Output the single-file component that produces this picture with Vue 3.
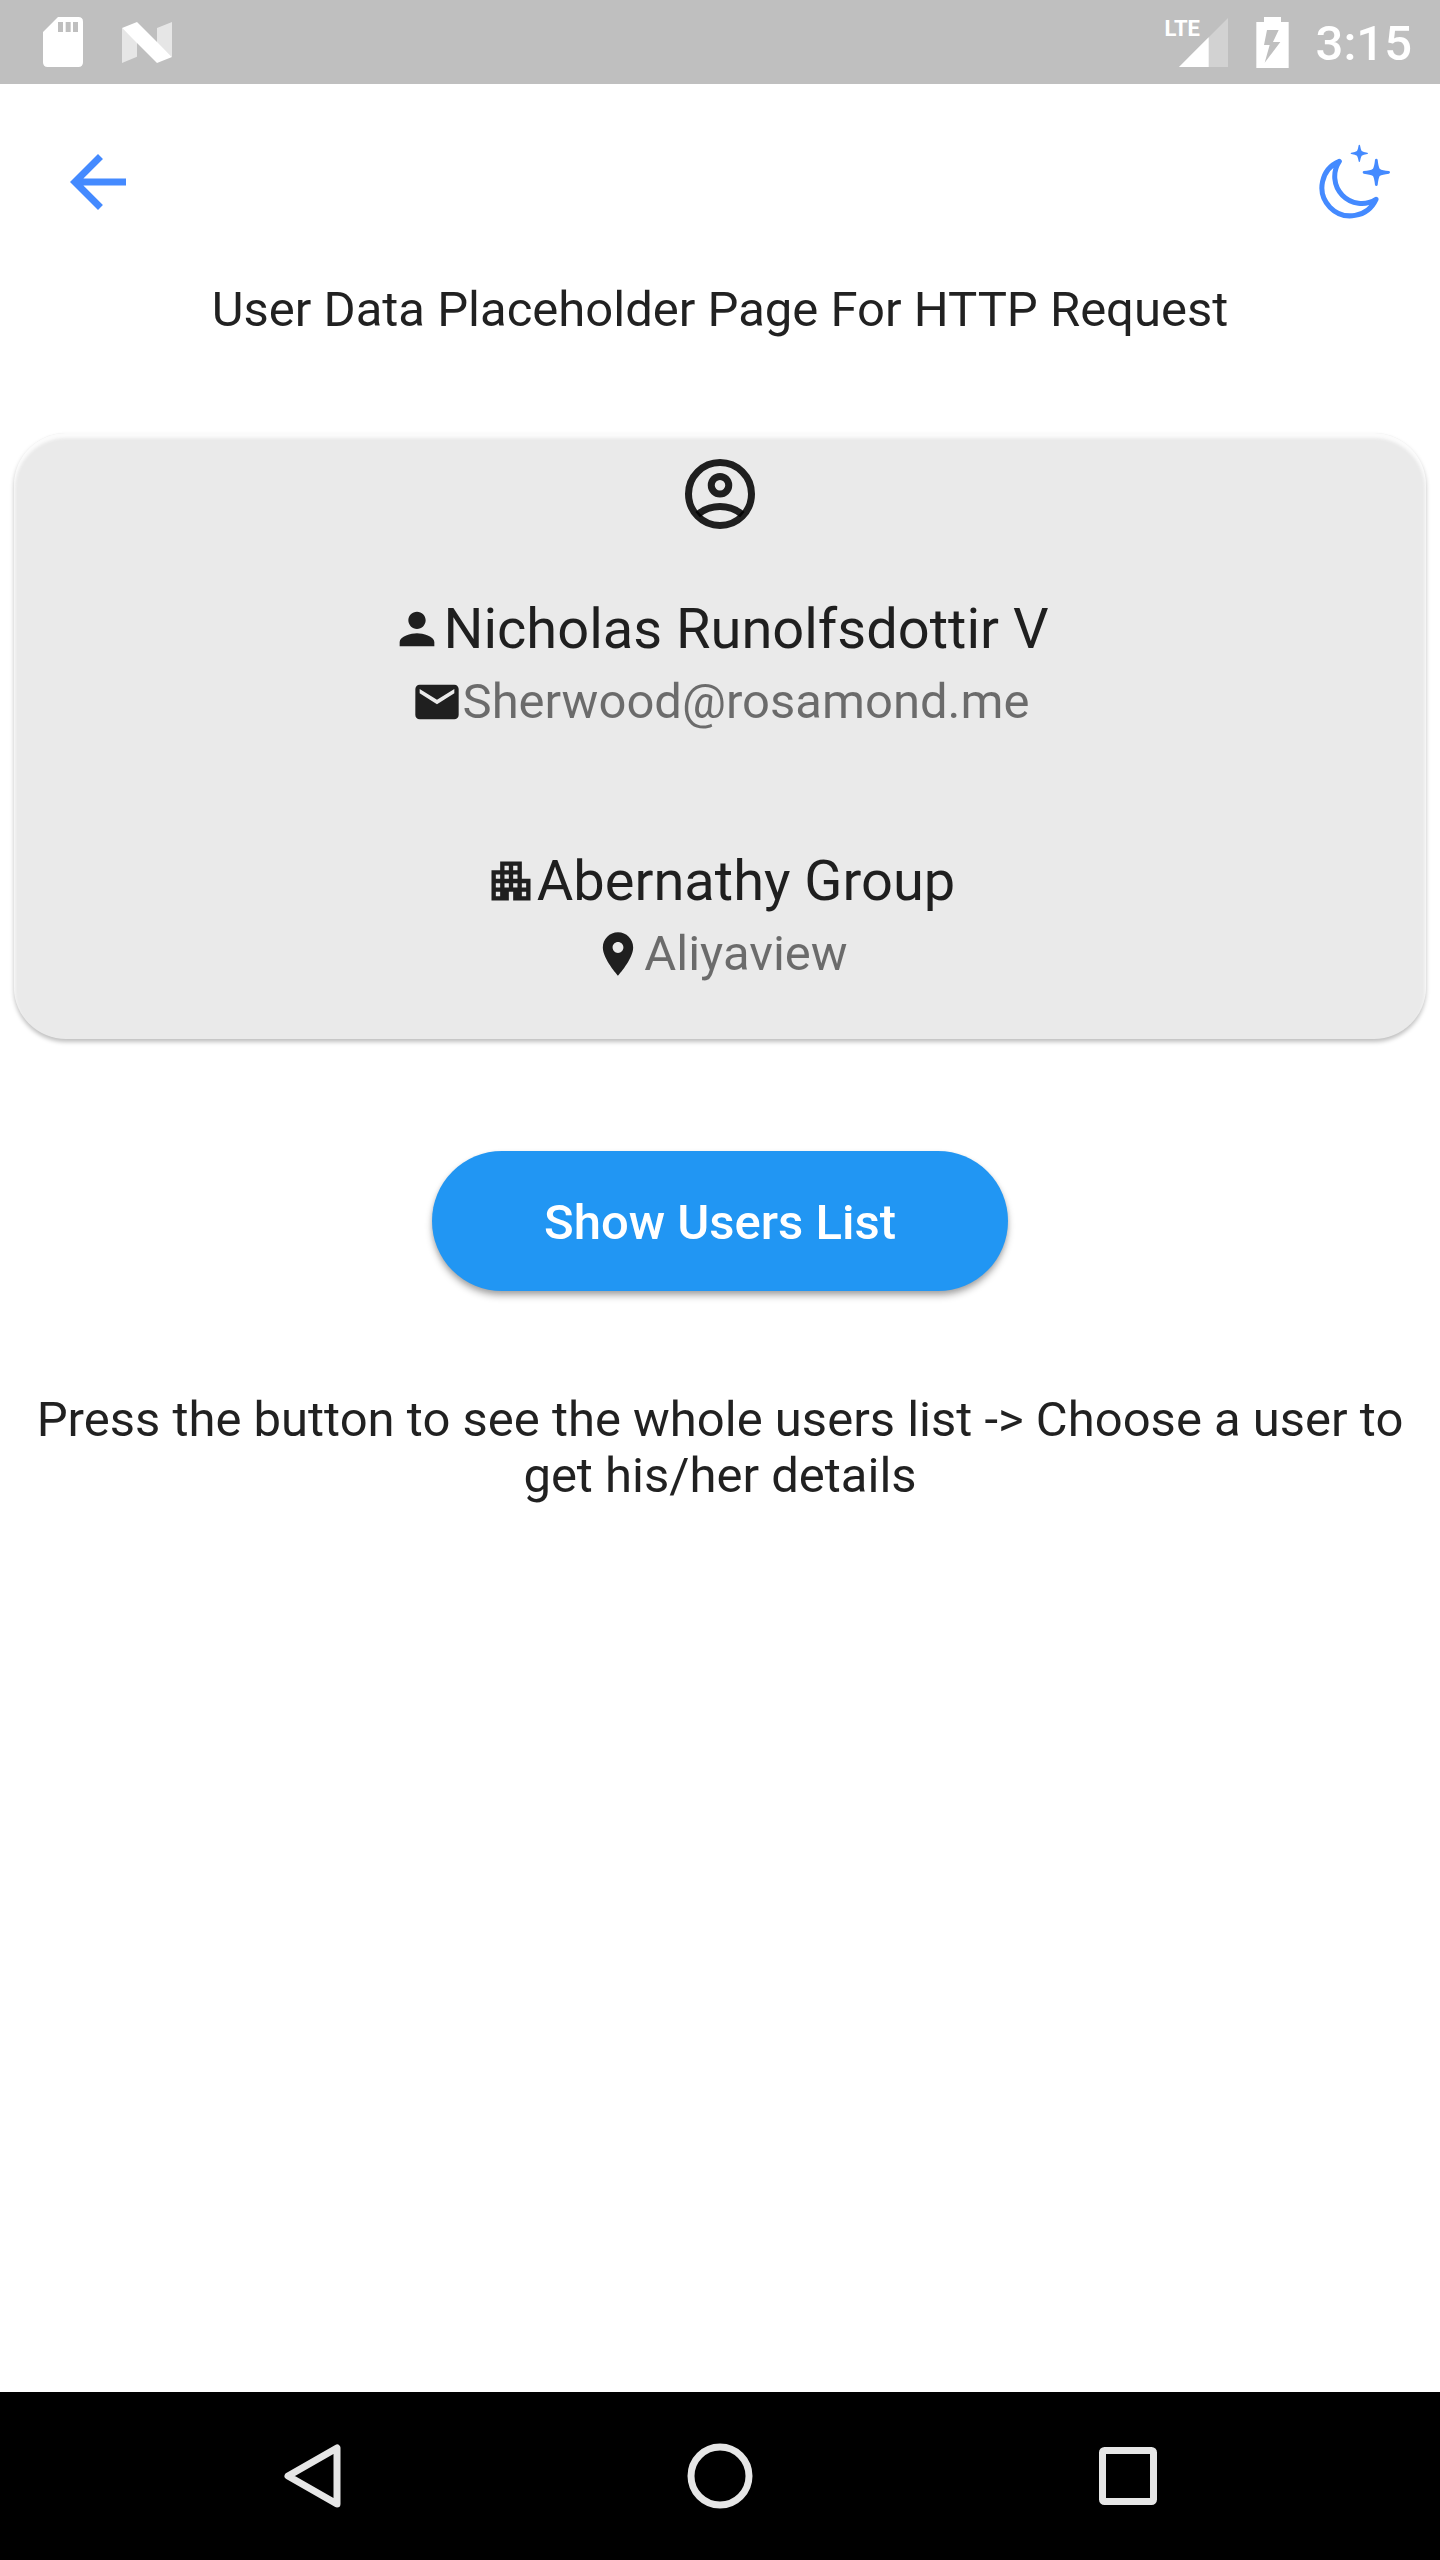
<script setup>
import { ref } from 'vue'

const user = ref({
  name: 'Nicholas Runolfsdottir V',
  email: 'Sherwood@rosamond.me',
  company: 'Abernathy Group',
  city: 'Aliyaview',
})
</script>

<template>
  <div class="screen">
    <header class="status-bar">
      <div class="status-group notices">
        <svg class="sd" viewBox="0 0 120 150" aria-hidden="true">
          <path fill="#fff" fill-rule="evenodd" d="M45 0H106Q120 0 120 14V136Q120 150 106 150H14Q0 150 0 136V45ZM45 15V45H60V15ZM68 15V45H83V15ZM90 15V45H105V15Z" />
        </svg>
        <svg class="nougat" viewBox="0 0 150 123" aria-hidden="true">
          <path fill="#e6e6e6" d="M0 18L45 60V104L0 123ZM105 18L150 0V105L105 62Z" />
          <path fill="#fff" d="M0 18L45 0L150 105L105 123Z" />
        </svg>
      </div>
      <div class="status-group">
        <div class="signal">
          <svg viewBox="0 0 186 150" aria-hidden="true">
            <path fill="#d2d2d2" d="M36 150L183 3V150Z" />
            <path fill="#fff" d="M36 150L125 61V150Z" />
          </svg>
          <span class="network">LTE</span>
        </div>
        <svg class="battery" viewBox="0 0 99 153" aria-hidden="true">
          <path fill="#fff" fill-rule="evenodd" d="M24 0H75V15H98V153H1V15H24ZM33 39L24 84H41L26 137L73 75H51L68 39Z" />
        </svg>
        <time class="clock">3:15</time>
      </div>
    </header>

    <nav class="app-bar">
      <button class="icon-button back" type="button" aria-label="Back">
        <svg viewBox="0 0 24 24"><path d="M20 11H7.83l5.59-5.59L12 4l-8 8 8 8 1.41-1.41L7.83 13H20v-2z" /></svg>
      </button>
      <button class="icon-button theme" type="button" aria-label="Dark mode">
        <svg viewBox="0 0 228 228">
          <path class="moon" d="M67 52A85 85 0 1 0 177 166A81 81 0 0 1 67 52Z" />
          <path transform="translate(178 85)" d="M0-41Q3-41 4-38Q6-18 10-11Q18-5 38-4Q41-3 41 0Q41 3 38 4Q18 6 10 11Q6 18 4 38Q3 41 0 41Q-3 41-4 38Q-6 18-10 11Q-18 6-38 4Q-41 3-41 0Q-41-3-38-4Q-18-5-10-11Q-6-18-4-38Q-3-41 0-41Z" />
          <path transform="translate(127 28)" d="M0-26Q2-26 2-24Q4-12 7-7Q12-4 24-2Q26-2 26 0Q26 2 24 2Q12 4 7 7Q4 12 2 24Q2 26 0 26Q-2 26-2 24Q-4 12-7 7Q-12 4-24 2Q-26 2-26 0Q-26-2-24-2Q-12-4-7-7Q-4-12-2-24Q-2-26 0-26Z" />
        </svg>
      </button>
    </nav>

    <main class="content">
      <h1 class="title">User Data Placeholder Page For HTTP Request</h1>

      <section class="card">
        <svg class="avatar" viewBox="0 0 24 24" aria-hidden="true">
          <g fill="none" stroke="currentColor" stroke-width="2">
            <circle cx="12" cy="12" r="9" />
            <circle cx="12" cy="9.5" r="2.5" />
            <path d="M5.6 17.9C7.3 16.5 9.6 15.6 12 15.6s4.7.9 6.4 2.3" />
          </g>
        </svg>
        <div class="entry">
          <p class="row primary">
            <svg viewBox="0 0 24 24" aria-hidden="true"><path d="M12 12c2.210 0 4-1.790 4-4s-1.790-4-4-4-4 1.790-4 4 1.790 4 4 4zm0 2c-2.670 0-8 1.340-8 4v2h16v-2c0-2.660-5.330-4-8-4z" /></svg>
            <span>{{ user.name }}</span>
          </p>
          <p class="row secondary">
            <svg viewBox="0 0 24 24" aria-hidden="true"><path d="M20 4H4c-1.100 0-1.990.9-1.990 2L2 18c0 1.100.9 2 2 2h16c1.100 0 2-.9 2-2V6c0-1.100-.9-2-2-2zm0 4l-8 5-8-5V6l8 5 8-5v2z" /></svg>
            <span>{{ user.email }}</span>
          </p>
        </div>
        <div class="entry">
          <p class="row primary">
            <svg viewBox="0 0 24 24" aria-hidden="true"><path d="M17 11V3H7v4H3v14h8v-4h2v4h8V11h-4zM7 19H5v-2h2v2zm0-4H5v-2h2v2zm0-4H5V9h2v2zm4 4H9v-2h2v2zm0-4H9V9h2v2zm0-4H9V5h2v2zm4 8h-2v-2h2v2zm0-4h-2V9h2v2zm0-4h-2V5h2v2zm4 12h-2v-2h2v2zm0-4h-2v-2h2v2z" /></svg>
            <span>{{ user.company }}</span>
          </p>
          <p class="row secondary">
            <svg viewBox="0 0 24 24" aria-hidden="true"><path d="M12 2C8.130 2 5 5.130 5 9c0 5.250 7 13 7 13s7-7.750 7-13c0-3.870-3.130-7-7-7zm0 9.500c-1.380 0-2.500-1.120-2.500-2.500s1.120-2.500 2.500-2.500 2.500 1.120 2.500 2.500-1.120 2.500-2.500 2.500z" /></svg>
            <span>{{ user.city }}</span>
          </p>
        </div>
      </section>

      <button class="show-users" type="button">Show Users List</button>

      <p class="hint">Press the button to see the whole users list -&gt; Choose a user to get his/her details</p>
    </main>

    <footer class="nav-bar">
      <button type="button" aria-label="Back">
        <svg viewBox="0 0 72 72"><path d="M61 8V64L12 36Z" /></svg>
      </button>
      <button type="button" aria-label="Home">
        <svg viewBox="0 0 72 72"><circle cx="36" cy="36" r="29" /></svg>
      </button>
      <button type="button" aria-label="Overview">
        <svg viewBox="0 0 72 72"><rect x="10.5" y="10.5" width="51" height="51" rx="2" /></svg>
      </button>
    </footer>
  </div>
</template>

<style>
body {
  margin: 0;
}
</style>

<style scoped>
.screen {
  display: flex;
  flex-direction: column;
  min-height: 100vh;
  background: #fff;
  color: rgba(0, 0, 0, 0.87);
  font-family: Roboto, "Liberation Sans", sans-serif;
  font-size: 49px;
  line-height: 56px;
}

svg {
  display: block;
  flex: none;
}

button {
  padding: 0;
  border: 0;
  background: none;
  font: inherit;
  cursor: pointer;
}

.status-bar {
  display: flex;
  justify-content: space-between;
  height: 84px;
  padding: 0 28px 0 43px;
  background: #bfbfbf;
  color: #fff;
}

.status-group {
  display: flex;
  align-items: center;
  gap: 27px;
}

.notices {
  gap: 39px;
}

.sd {
  width: 40px;
  height: 50px;
}

.nougat {
  width: 50px;
  height: 41px;
}

.signal {
  position: relative;
}

.signal svg {
  width: 62px;
  height: 50px;
}

.network {
  position: absolute;
  top: 0;
  left: -2px;
  font: bold 22px/24px "Liberation Sans Narrow", Roboto, sans-serif;
}

.battery {
  width: 33px;
  height: 51px;
}

.clock {
  font-weight: 500;
  margin-top: 4px;
}

.app-bar {
  display: flex;
  justify-content: space-between;
  align-items: center;
  height: 196px;
  padding: 0 47px 0 56px;
}

.icon-button {
  color: #448aff;
}

.icon-button svg {
  fill: currentColor;
}

.back svg {
  width: 84px;
  height: 84px;
}

.theme svg {
  width: 76px;
  height: 76px;
}

.moon {
  fill: none;
  stroke: currentColor;
  stroke-width: 15;
  stroke-linejoin: round;
}

.content {
  display: flex;
  flex: 1;
  flex-direction: column;
  align-items: center;
  padding-top: 2px;
}

.title {
  margin: 0;
  font-size: 49px;
  font-weight: 400;
  text-align: center;
}

.card {
  box-sizing: border-box;
  display: flex;
  flex-direction: column;
  align-items: center;
  align-self: stretch;
  margin: 95px 14px 112px;
  padding: 19px 14px 56px;
  border-radius: 52px;
  background: #eaeaea;
  box-shadow: inset 0 4px 3px 1px #fbfbfb, 0 3px 4px rgba(0, 0, 0, 0.25);
}

.avatar {
  width: 84px;
  height: 84px;
}

.entry {
  display: flex;
  flex-direction: column;
  gap: 11px;
  margin-top: 60px;
}

.entry + .entry {
  margin-top: 117px;
}

.row {
  display: flex;
  justify-content: center;
  align-items: center;
  margin: 0;
}

.row svg {
  width: 52px;
  height: 52px;
  fill: rgba(0, 0, 0, 0.87);
}

.primary {
  font-size: 56px;
  line-height: 66px;
}

.secondary {
  line-height: 58px;
}

.secondary span {
  color: rgba(0, 0, 0, 0.54);
}

.show-users {
  height: 140px;
  padding: 3px 112px 0;
  border-radius: 70px;
  background: #2196f3;
  color: #fff;
  font-weight: 500;
  box-shadow: 0 5px 7px rgba(0, 0, 0, 0.28), 0 2px 4px rgba(0, 0, 0, 0.12);
}

.hint {
  margin: 101px 28px 0;
  text-align: center;
}

.nav-bar {
  display: flex;
  height: 168px;
  padding: 0 7.5%;
  background: #000;
}

.nav-bar button {
  display: flex;
  flex: 1;
  align-items: center;
  justify-content: center;
}

.nav-bar svg {
  width: 72px;
  height: 72px;
  fill: none;
  stroke: #e6e6e6;
  stroke-width: 7;
  stroke-linejoin: round;
}
</style>
